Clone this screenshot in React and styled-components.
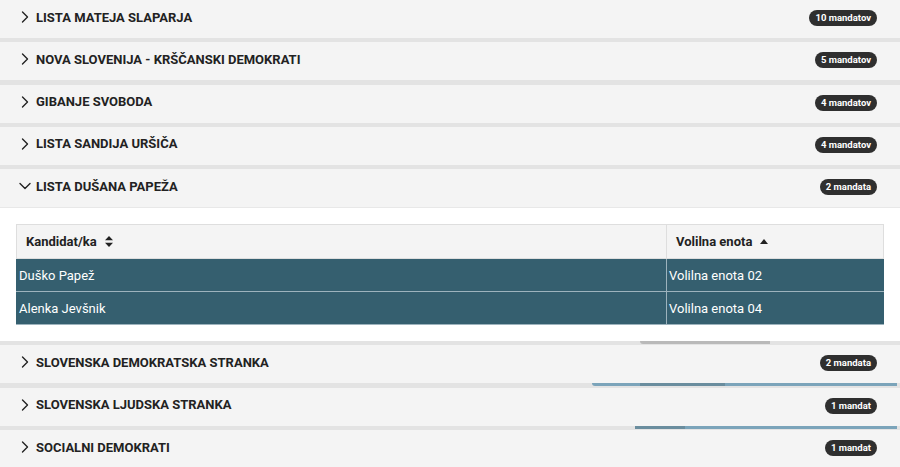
import styled, { createGlobalStyle } from "styled-components";

const GlobalStyle = createGlobalStyle`
  body {
    margin: 0;
    background: #ffffff;
    font-family: Roboto, "Liberation Sans", sans-serif;
    color: #222;
  }
`;

const parties = [
  { name: "LISTA MATEJA SLAPARJA", seats: "10 mandatov" },
  { name: "NOVA SLOVENIJA - KRŠČANSKI DEMOKRATI", seats: "5 mandatov" },
  { name: "GIBANJE SVOBODA", seats: "4 mandatov" },
  { name: "LISTA SANDIJA URŠIČA", seats: "4 mandatov" },
  {
    name: "LISTA DUŠANA PAPEŽA",
    seats: "2 mandata",
    open: true,
    candidates: [
      { name: "Duško Papež", unit: "Volilna enota 02" },
      { name: "Alenka Jevšnik", unit: "Volilna enota 04" },
    ],
  },
  { name: "SLOVENSKA DEMOKRATSKA STRANKA", seats: "2 mandata", bar: { left: 640, width: 130, tone: "gray" } },
  { name: "SLOVENSKA LJUDSKA STRANKA", seats: "1 mandat", bar: { left: 592, width: 305, tone: "blue", dark: [48, 85] } },
  { name: "SOCIALNI DEMOKRATI", seats: "1 mandat", bar: { left: 635, width: 262, tone: "blue", dark: [0, 50] } },
];

const Chevron = ({ open }) => (
  <svg width="12" height="12" viewBox="0 0 12 12" fill="none" stroke="#222" strokeWidth="1.4" strokeLinecap="round" strokeLinejoin="round">
    {open ? <path d="M1 3.5 L6 8.5 L11 3.5" /> : <path d="M3.5 1 L8.5 6 L3.5 11" />}
  </svg>
);

const SortBoth = () => (
  <svg width="8" height="11" viewBox="0 0 8 11" fill="#222">
    <path d="M4 0 L8 4.3 H0 Z" />
    <path d="M4 11 L8 6.7 H0 Z" />
  </svg>
);

const SortUp = () => (
  <svg width="8" height="5" viewBox="0 0 8 5" fill="#222">
    <path d="M4 0 L8 5 H0 Z" />
  </svg>
);

const App = () => (
  <>
    <GlobalStyle />
    <List>
      {parties.map((p, i) => (
        <Panel key={p.name}>
          {i > 0 && (
            <Separator>
              {p.bar && (
                <Bar tone={p.bar.tone} style={{ marginLeft: p.bar.left, width: p.bar.width }}>
                  {p.bar.dark && (
                    <DarkPart style={{ marginLeft: p.bar.dark[0], width: p.bar.dark[1] }} />
                  )}
                </Bar>
              )}
            </Separator>
          )}
          <Header>
            <Chevron open={p.open} />
            <Title>{p.name}</Title>
            <Badge>{p.seats}</Badge>
          </Header>
          {p.open && (
            <Body>
              <Table>
                <thead>
                  <tr>
                    <Th>
                      <ThInner>
                        Kandidat/ka <SortBoth />
                      </ThInner>
                    </Th>
                    <Th narrow>
                      <ThInner>
                        Volilna enota <SortUp />
                      </ThInner>
                    </Th>
                  </tr>
                </thead>
                <tbody>
                  {p.candidates.map((c) => (
                    <tr key={c.name}>
                      <Td>{c.name}</Td>
                      <Td>{c.unit}</Td>
                    </tr>
                  ))}
                </tbody>
              </Table>
            </Body>
          )}
        </Panel>
      ))}
    </List>
  </>
);

const List = styled.div`
  display: flex;
  flex-direction: column;
  width: 900px;
`;

const Panel = styled.div`
  display: flex;
  flex-direction: column;
`;

const Separator = styled.div`
  height: 4.3px;
  background: #e3e3e3;
  display: flex;
  align-items: flex-start;
`;

const Bar = styled.div`
  height: 3px;
  display: flex;
  background: ${(p) => (p.tone === "blue" ? "#7ba4ba" : "#b9b9b9")};
  border-radius: 0 0 0 3px;
`;

const DarkPart = styled.div`
  height: 3px;
  background: #6a8d9e;
`;

const Header = styled.div`
  height: 38px;
  box-sizing: border-box;
  background: #f4f4f4;
  display: flex;
  align-items: center;
  padding: 0 23px 4px 19px;
  gap: 5px;
`;

const Title = styled.div`
  flex: 1;
  font-size: 13px;
  font-weight: 700;
  color: #222;
`;

const Badge = styled.span`
  background: #2f2f2f;
  color: #fff;
  font-size: 9.5px;
  font-weight: 700;
  line-height: 16px;
  padding: 0 6px;
  border-radius: 8px;
  margin-top: 2px;
`;

const Body = styled.div`
  background: #fff;
  padding: 16px;
  height: 101px;
  border-top: 1px solid #e8e8e8;
`;

const Table = styled.table`
  width: 868px;
  border-collapse: collapse;
  font-size: 13px;
`;

const Th = styled.th`
  background: #f4f4f4;
  border: 1px solid #dedede;
  text-align: left;
  height: 33px;
  padding: 0 0 0 9px;
  width: ${(p) => (p.narrow ? "207px" : "auto")};
  font-weight: 700;
  color: #222;
`;

const ThInner = styled.span`
  display: inline-flex;
  align-items: center;
  gap: 8px;
`;

const Td = styled.td`
  background: #355f6f;
  color: #fff;
  height: 32px;
  padding: 0 0 0 2px;
  border: 1px solid #9db3bd;
  border-top-color: #a8bcc5;
  &:first-child {
    border-left-color: #355f6f;
  }
  &:last-child {
    border-right-color: #355f6f;
  }
`;

export default App;
